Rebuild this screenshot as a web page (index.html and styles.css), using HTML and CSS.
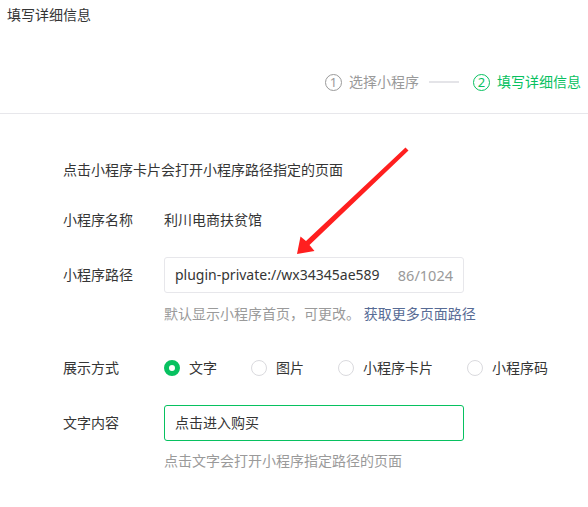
FILE: index.html
```html
<!DOCTYPE html>
<html lang="zh-CN">
<head>
<meta charset="utf-8">
<title>填写详细信息</title>
<link rel="stylesheet" href="styles.css">
</head>
<body>
<div class="page">
  <div class="title">填写详细信息</div>
  <div class="steps">
    <span class="step">
      <span class="num">1</span>
      <span class="step-text">选择小程序</span>
    </span>
    <span class="step-line"></span>
    <span class="step active">
      <span class="num">2</span>
      <span class="step-text">填写详细信息</span>
    </span>
  </div>
  <div class="divider"></div>

  <div class="form">
    <div class="tip">点击小程序卡片会打开小程序路径指定的页面</div>

    <div class="row row-name">
      <div class="label">小程序名称</div>
      <div class="value">利川电商扶贫馆</div>
    </div>

    <div class="row row-path">
      <div class="label">小程序路径</div>
      <div class="input">
        <span class="input-text">plugin-private://wx34345ae589</span>
        <span class="counter">86/1024</span>
      </div>
    </div>
    <div class="hint hint-path">默认显示小程序首页，可更改。 <a class="link">获取更多页面路径</a></div>

    <div class="row row-radio">
      <div class="label">展示方式</div>
      <div class="radios">
        <span class="radio checked"><i class="dot"></i>文字</span>
        <span class="radio"><i class="dot"></i>图片</span>
        <span class="radio"><i class="dot"></i>小程序卡片</span>
        <span class="radio"><i class="dot"></i>小程序码</span>
      </div>
    </div>

    <div class="row row-text">
      <div class="label">文字内容</div>
      <div class="input focus">
        <span class="input-text">点击进入购买</span>
      </div>
    </div>
    <div class="hint hint-text">点击文字会打开小程序指定路径的页面</div>
  </div>

  <svg class="arrow" width="588" height="507" viewBox="0 0 588 507">
    <polygon points="297,254 300.5,236.5 306,241 405.5,147.5 408.5,150.5 309.5,245 314.5,251" fill="#ff1f1f"/>
  </svg>
</div>
</body>
</html>
```

FILE: styles.css
```css
* { box-sizing: border-box; }
html, body { margin: 0; padding: 0; background: #fff; }
body {
  font-family: "Noto Sans", "Noto Sans CJK SC", sans-serif;
  font-size: 14px;
  line-height: 20px;
  color: #353535;
}
.page { position: relative; width: 588px; height: 507px; overflow: hidden; }

.title { padding: 5px 7px; height: 30px; }

.steps {
  margin-top: 42px;
  display: flex;
  justify-content: flex-end;
  align-items: center;
  padding-right: 7px;
  height: 20px;
  color: #9a9a9a;
}
.step { display: flex; align-items: center; gap: 7px; }
.num {
  width: 17px; height: 17px;
  border: 1px solid currentColor;
  border-radius: 50%;
  font-size: 13px;
  line-height: 15px;
  text-align: center;
  display: inline-block;
}
.step-line {
  width: 30px; height: 2px;
  background: #e4e4e8;
  margin: 0 14px 0 10px;
}
.step.active { color: #07c160; }

.divider { margin-top: 21px; border-bottom: 1px solid #e7e7eb; }

.form { padding-left: 63px; }
.tip { margin-top: 46px; }

.row { display: flex; align-items: center; }
.label { width: 101px; flex: none; }
.row-name { margin-top: 30px; }
.row-path { margin-top: 27px; }
.row-radio { margin-top: 34px; }
.row-text { margin-top: 27px; }

.input {
  width: 300px; height: 36px;
  border: 1px solid #e7e7eb;
  border-radius: 3px;
  display: flex;
  align-items: center;
  padding: 0 10px;
  gap: 8px;
}
.input.focus { border-color: #07c160; }
.input-text { flex: 1; min-width: 0; white-space: nowrap; overflow: hidden; text-overflow: clip; }
.counter { color: #9a9a9a; flex: none; font-size: 14.5px; }

.hint { color: #9a9a9a; padding-left: 101px; }
.hint-path { margin-top: 11px; }
.hint-text { margin-top: 10px; }
.link { color: #576b95; }

.radios { display: flex; gap: 34px; }
.radio { display: flex; align-items: center; gap: 9px; }
.dot {
  width: 16px; height: 16px;
  border: 1px solid #dadade;
  border-radius: 50%;
  display: inline-block;
}
.radio.checked .dot {
  border: 5px solid #07c160;
  background: #fff;
}

.arrow { position: absolute; left: 0; top: 0; pointer-events: none; }
```
